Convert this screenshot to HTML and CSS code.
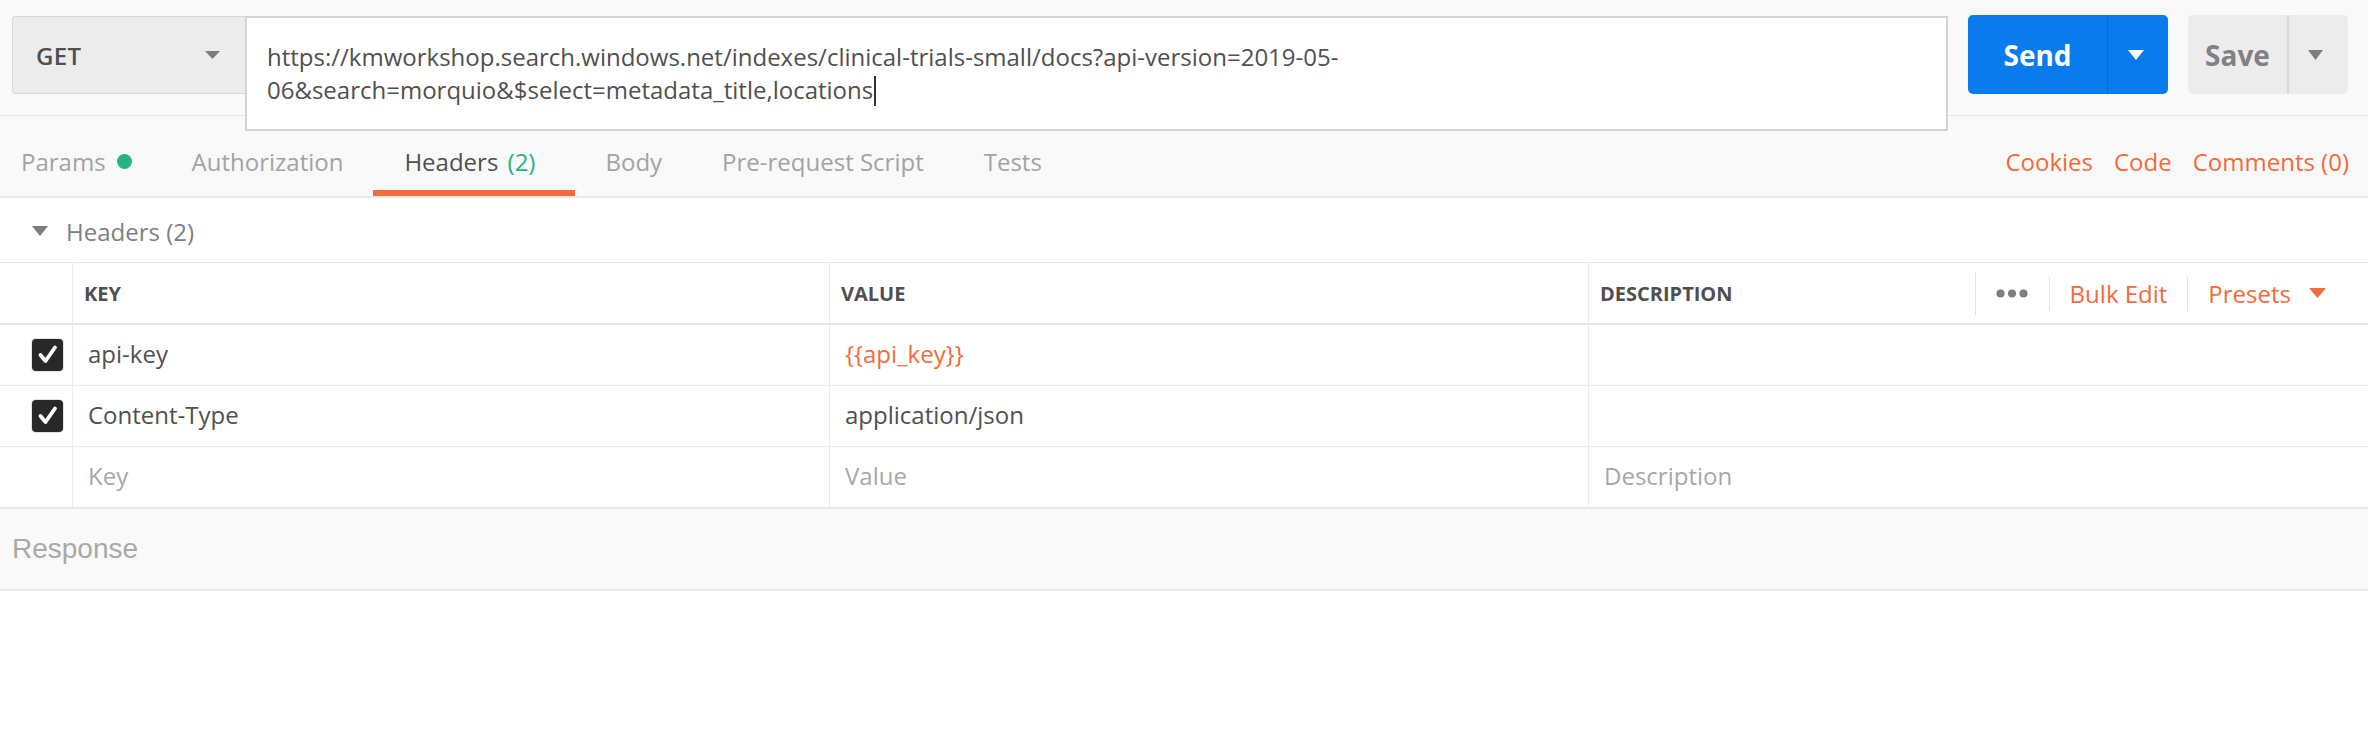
FILE: index.html
```html
<!DOCTYPE html>
<html>
<head>
<meta charset="utf-8">
<title>Request</title>
<link rel="stylesheet" href="styles.css">
</head>
<body>
<div class="app">
  <div class="topbar">
    <div class="method">
      <span class="method-label">GET</span>
      <svg class="method-caret" width="15" height="8" viewBox="0 0 15 8"><polygon points="0,0 15,0 7.5,8"/></svg>
    </div>
    <div class="url">https://kmworkshop.search.windows.net/indexes/clinical-trials-small/docs?api-version=2019-05-<br>06&amp;search=morquio&amp;$select=metadata_title,locations<span class="cursor"></span></div>
    <div class="btn-group send">
      <span class="btn-main">Send</span>
      <span class="btn-split"><svg width="16" height="10" viewBox="0 0 16 10"><polygon points="0,0 16,0 8,10"/></svg></span>
    </div>
    <div class="btn-group save">
      <span class="btn-main">Save</span>
      <span class="btn-split"><svg width="15" height="10" viewBox="0 0 15 10"><polygon points="0,0 15,0 7.5,10"/></svg></span>
    </div>
  </div>

  <div class="tabbar">
    <nav class="tabs">
      <div class="tab first">Params<span class="dot"></span></div>
      <div class="tab">Authorization</div>
      <div class="tab active">Headers <span class="count">(2)</span></div>
      <div class="tab">Body</div>
      <div class="tab">Pre-request Script</div>
      <div class="tab">Tests</div>
    </nav>
    <div class="links">
      <span>Cookies</span>
      <span>Code</span>
      <span>Comments (0)</span>
    </div>
  </div>

  <section class="headers-section">
    <div class="section-title">
      <svg class="section-caret" width="16" height="10" viewBox="0 0 16 10"><polygon points="0,0 16,0 8,10"/></svg>
      <span>Headers (2)</span>
    </div>
    <div class="kv-table">
      <div class="th cb"></div>
      <div class="th col">Key</div>
      <div class="th col">Value</div>
      <div class="th col last">
        <span>Description</span>
        <div class="tools">
          <span class="vsep tall"></span>
          <svg class="dots" width="32" height="9" viewBox="0 0 32 9"><circle cx="4.5" cy="4.5" r="4"/><circle cx="16" cy="4.5" r="4"/><circle cx="27.5" cy="4.5" r="4"/></svg>
          <span class="vsep"></span>
          <span class="tool-link">Bulk Edit</span>
          <span class="vsep"></span>
          <span class="tool-link">Presets</span>
          <svg class="presets-caret" width="17" height="10" viewBox="0 0 17 10"><polygon points="0,0 17,0 8.5,10"/></svg>
        </div>
      </div>

      <div class="td cb"><span class="checkbox"><svg width="30" height="31" viewBox="0 0 30 31"><path d="M7.5 16 L12.5 22 L22 8.5" fill="none" stroke="#fff" stroke-width="3.8" stroke-linecap="round" stroke-linejoin="round"/></svg></span></div>
      <div class="td col">api-key</div>
      <div class="td col var">{{api_key}}</div>
      <div class="td col"></div>

      <div class="td cb"><span class="checkbox"><svg width="30" height="31" viewBox="0 0 30 31"><path d="M7.5 16 L12.5 22 L22 8.5" fill="none" stroke="#fff" stroke-width="3.8" stroke-linecap="round" stroke-linejoin="round"/></svg></span></div>
      <div class="td col">Content-Type</div>
      <div class="td col">application/json</div>
      <div class="td col"></div>

      <div class="td cb lastrow"></div>
      <div class="td col placeholder lastrow">Key</div>
      <div class="td col placeholder lastrow">Value</div>
      <div class="td col placeholder lastrow">Description</div>
    </div>
  </section>

  <div class="response">Response</div>
</div>
</body>
</html>
```

FILE: styles.css
```css
* { box-sizing: border-box; }

html, body {
  margin: 0;
  padding: 0;
  background: #ffffff;
}

body {
  width: 2368px;
  font-family: "Open Sans", "Noto Sans", sans-serif;
  font-size: 24px;
  color: #505050;
}

/* ---------- top bar ---------- */
.topbar {
  display: flex;
  align-items: flex-start;
  height: 116px;
  padding: 15px 20px 0 12px;
  background: #f9f9f9;
  border-bottom: 1px solid #e6e6e6;
}

.method {
  margin-top: 1px;
  width: 233px;
  height: 78px;
  display: flex;
  align-items: center;
  justify-content: space-between;
  padding: 0 25px 0 23px;
  background: #ececec;
  border: 1px solid #d6d6d6;
  border-right: none;
  border-radius: 4px 0 0 4px;
}

.method-label {
  font-weight: 600;
  font-size: 24px;
  color: #505050;
  letter-spacing: 0.3px;
}

.method-caret { fill: #7d7d7d; }

.url {
  position: relative;
  z-index: 1;
  margin-top: 1px;
  width: 1703px;
  height: 115px;
  padding: 22px 18px 0 20px;
  background: #ffffff;
  border: 2px solid #d4d4d4;
  font-size: 24px;
  line-height: 33px;
  color: #505050;
  white-space: nowrap;
}

.cursor {
  display: inline-block;
  width: 2px;
  height: 30px;
  margin-left: 1px;
  vertical-align: -7px;
  background: #333333;
}

.btn-group {
  display: flex;
  height: 79px;
  border-radius: 5px;
  overflow: hidden;
  font-weight: 700;
  font-size: 28px;
}

.btn-main,
.btn-split {
  display: flex;
  align-items: center;
  justify-content: center;
}

.send {
  margin-left: 20px;
  width: 200px;
  background: #097bed;
  color: #ffffff;
}

.send .btn-main { width: 139px; }
.send .btn-split {
  flex: 1;
  border-left: 1px solid #0a68cc;
  padding-right: 4px;
}
.send svg { fill: #ffffff; }

.save {
  margin-left: 20px;
  width: 160px;
  background: #ececec;
  color: #818181;
}

.save .btn-main { width: 99px; }
.save .btn-split {
  flex: 1;
  border-left: 2px solid #d9d9d9;
  padding-right: 6px;
}
.save svg { fill: #7d7d7d; }

/* ---------- tab bar ---------- */
.tabbar {
  display: flex;
  height: 82px;
  background: #f9f9f9;
  border-bottom: 2px solid #e8e8e8;
}

.tabs { display: flex; }

.tab {
  height: 80px;
  display: flex;
  align-items: center;
  padding: 16px 30px 0;
  border-bottom: 6px solid transparent;
  color: #a3a3a3;
  white-space: pre;
}

.tab.first { padding-left: 21px; }

.tab.active {
  color: #505050;
  border-bottom-color: #f26b3a;
  padding-left: 31px;
  padding-right: 40px;
}

.count {
  color: #26b47f;
  margin-left: 3px;
}

.dot {
  width: 15px;
  height: 15px;
  margin-left: 11px;
  border-radius: 50%;
  background: #26b47f;
}

.links {
  margin-left: auto;
  display: flex;
  align-items: center;
  gap: 21px;
  height: 80px;
  padding: 16px 19px 6px 0;
  color: #f26b3a;
}

/* ---------- headers section ---------- */
.section-title {
  height: 64px;
  display: flex;
  align-items: center;
  padding: 2px 0 0 32px;
  color: #808080;
}

.section-caret {
  fill: #7d7d7d;
  margin-right: 18px;
}

.kv-table {
  display: grid;
  grid-template-columns: 72px 757px 759px 1fr;
  border-top: 1px solid #e6e6e6;
}

.th {
  height: 62px;
  display: flex;
  align-items: center;
  padding-left: 11px;
  border-bottom: 2px solid #e6e6e6;
  font-weight: 700;
  font-size: 20px;
  text-transform: uppercase;
  color: #4f4f4f;
}

.td {
  height: 61px;
  display: flex;
  align-items: center;
  padding: 0 0 3px 15px;
  border-bottom: 1px solid #ececec;
  color: #505050;
}

.td.lastrow { border-bottom: none; height: 60px; }

.col { border-left: 1px solid #ececec; }

.td.cb,
.th.cb {
  justify-content: flex-end;
  padding: 0 9px 1px 0;
}

.checkbox {
  width: 31px;
  height: 32px;
  border-radius: 4px;
  background: #282828;
  box-shadow: 0 0 0 1px #e2e2e2;
  display: flex;
  align-items: center;
  justify-content: center;
}

.var { color: #f26b3a; }

.placeholder { color: #a8a8a8; }

.th.last { padding-right: 0; }

.tools {
  margin-left: auto;
  display: flex;
  align-items: center;
  padding-right: 42px;
  text-transform: none;
  font-weight: 400;
  font-size: 24px;
}

.vsep {
  width: 1px;
  height: 33px;
  background: #e2e2e2;
}

.vsep.tall { height: 43px; }

.dots {
  fill: #7d7d7d;
  margin: 0 21px 0 20px;
}

.tool-link {
  color: #f26b3a;
  margin: 0 20px;
}

.presets-caret {
  fill: #f26b3a;
  margin-left: -2px;
}

/* ---------- response ---------- */
.response {
  height: 84px;
  display: flex;
  align-items: center;
  padding-left: 12px;
  background: #f9f9f9;
  border-top: 2px solid #e8e8e8;
  border-bottom: 2px solid #e8e8e8;
  font-family: "Liberation Sans", Arial, sans-serif;
  font-size: 28px;
  color: #a9a9a9;
}
```
